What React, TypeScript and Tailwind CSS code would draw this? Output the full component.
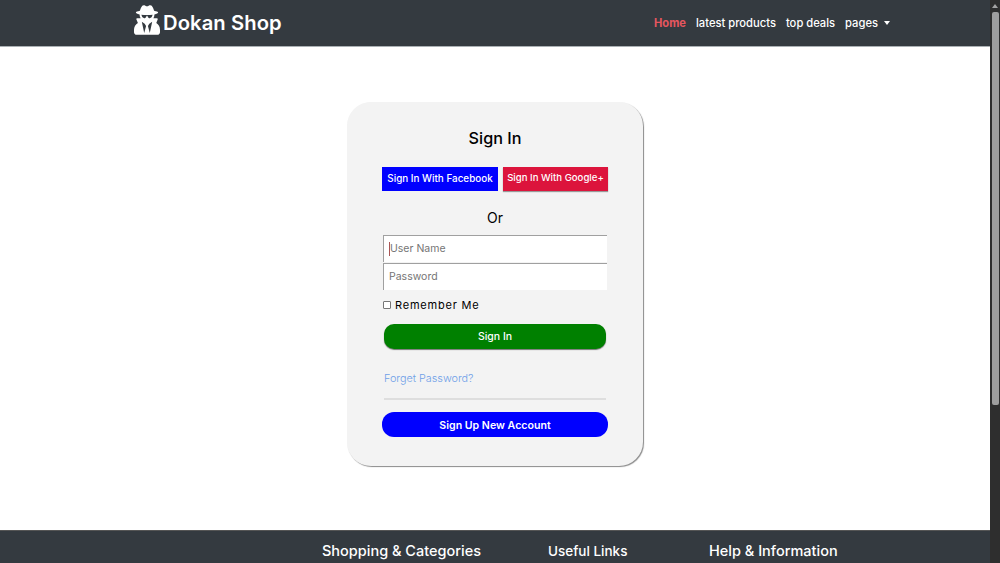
import { FaUserSecret } from 'react-icons/fa';

const App = () => {
    return (
        <div className="flex h-[563px] w-[1000px] overflow-hidden bg-white font-['Inter',sans-serif]">
            <div className="flex h-full w-[990px] flex-col">
                <nav className="flex h-[47px] shrink-0 items-center justify-between border-b border-[#aab0b4] bg-[#343a40] pl-[134px] pr-[100px]">
                    <div className="flex items-center gap-[3px]">
                        <FaUserSecret className="mb-[7px] h-[30px] w-[26px] text-white" />
                        <span className="text-[20.2px] font-semibold tracking-[0.1px] text-white">Dokan Shop</span>
                    </div>
                    <div className="flex items-center gap-[10px] text-[11.2px] font-medium text-white">
                        <span className="font-bold text-[#e4565f]">Home</span>
                        <span>latest products</span>
                        <span>top deals</span>
                        <span className="flex items-center gap-[6px]">
                            pages
                            <span className="border-x-[3.5px] border-t-[4px] border-x-transparent border-t-white" />
                        </span>
                    </div>
                </nav>
                <main className="flex flex-1 justify-center pt-[55px]">
                    <div className="flex h-[364px] w-[296px] flex-col items-center rounded-[24px] bg-[#f3f3f3] shadow-[1px_1px_1px_#8a8a8a]">
                        <h1 className="mt-[26px] text-[16.2px] leading-[20px] font-medium text-black">Sign In</h1>
                        <div className="mt-[19px] flex gap-[5px]">
                            <button className="h-[24px] w-[116px] bg-[#0000ff] pb-[1px] text-[9.9px] font-medium whitespace-nowrap text-white">Sign In With Facebook</button>
                            <button className="h-[24px] w-[105px] bg-[#dc143c] pb-[1px] text-[9.6px] font-medium whitespace-nowrap text-white shadow-[0_1px_1px_#999]">Sign In With Google+</button>
                        </div>
                        <p className="mt-[18px] text-[14px] leading-[18px] text-black">Or</p>
                        <div className="mt-[8px] flex w-[224px] flex-col gap-px">
                            <div className="flex h-[27px] items-center border-t border-l border-[#a0a0a0] bg-white pb-[1px] pl-[5px] text-[10.5px] text-[#757575]">
                                <span className="h-[14px] w-px bg-[#a55]" />
                                User Name
                            </div>
                            <div className="flex h-[27px] items-center border-t border-l border-[#a0a0a0] bg-white pb-[1px] pl-[5px] text-[10.5px] text-[#757575]">
                                Password
                            </div>
                        </div>
                        <label className="mt-[8px] flex w-[224px] items-center gap-[4px] text-[11px] leading-[14px] tracking-[0.8px] text-black">
                            <span className="h-[8px] w-[8px] rounded-[1px] border border-[#767676] bg-white" />
                            Remember Me
                        </label>
                        <button className="mt-[12px] h-[25px] w-[222px] rounded-[10px] bg-[#008000] text-[10.5px] font-medium text-white shadow-[0_1px_1px_#777]">Sign In</button>
                        <a className="mt-[23px] w-[222px] text-[10.8px] leading-[14px] font-light text-[#6f9fe8]">Forget Password?</a>
                        <hr className="mt-[12px] w-[222px] border-t-2 border-[#dedede]" />
                        <button className="mt-[12px] h-[25px] w-[226px] rounded-[12px] bg-[#0000ff] pt-[2px] text-[10.6px] font-semibold text-white">Sign Up New Account</button>
                    </div>
                </main>
                <footer className="flex h-[33px] shrink-0 border-t border-[#555] bg-[#343a40] pt-[10px] pl-[322px] text-[14.5px] leading-[20px] font-medium text-white">
                    <span className="w-[226px] whitespace-nowrap">Shopping & Categories</span>
                    <span className="w-[161px] text-[13.5px] whitespace-nowrap">Useful Links</span>
                    <span className="whitespace-nowrap">Help & Information</span>
                </footer>
            </div>
            <div className="flex h-full w-[10px] flex-col items-center bg-[#2e2e2e]">
                <span className="mt-[4px] border-x-[3.5px] border-b-[4px] border-x-transparent border-b-[#a3a3a3]" />
                <div className="mt-[4px] h-[393px] w-[7px] rounded-[2px] bg-[#9e9e9e]" />
            </div>
        </div>
    );
};

export default App;
